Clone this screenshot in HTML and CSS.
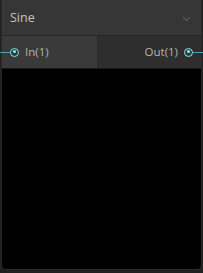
FILE: index.html
```html
<!DOCTYPE html>
<html lang="en">
<head>
  <meta charset="UTF-8">
  <title>Sine Node</title>
  <link rel="stylesheet" href="styles.css">
</head>
<body>
  <div class="node">
    <div class="node-header">
      <span class="node-title">Sine</span>
      <svg class="chevron" width="9" height="6" viewBox="0 0 9 6">
        <path d="M1 1 L4.5 4.5 L8 1" fill="none" stroke="#5a5a5a" stroke-width="1.2"/>
      </svg>
    </div>
    <div class="node-ports">
      <div class="port port-in">
        <span class="wire wire-in"></span>
        <span class="port-dot"></span>
        <span class="port-label">In(1)</span>
      </div>
      <div class="port port-out">
        <span class="port-label">Out(1)</span>
        <span class="port-dot"></span>
        <span class="wire wire-out"></span>
      </div>
    </div>
    <div class="node-preview"></div>
  </div>
</body>
</html>
```

FILE: styles.css
```css
/* General Styles */
* {
  box-sizing: border-box;
}

body {
  margin: 0;
  padding: 0;
  background-color: #202020;
  font-family: "Open Sans", "Liberation Sans", sans-serif;
  width: 203px;
  height: 273px;
  overflow: hidden;
}

.node {
  margin: 0 1px;
  height: 270px;
  display: flex;
  flex-direction: column;
  border: 1px solid #2a2a2a;
  border-top: none;
  border-radius: 0 0 5px 5px;
}

.node-header {
  height: 36px;
  background-color: #363636;
  border-bottom: 1px solid #262626;
  display: flex;
  align-items: center;
  justify-content: space-between;
  padding: 0 10px 0 8px;
}

.node-title {
  color: #c4c4c4;
  font-size: 12.5px;
}

.chevron {
  margin-top: 2px;
}

.node-ports {
  height: 33px;
  display: flex;
  border-bottom: 1px solid #1a1a1a;
}

.port {
  position: relative;
  display: flex;
  align-items: center;
  font-size: 11.5px;
  color: #b4b4b4;
}

.port-in {
  width: 96px;
  background-color: #3a3a3a;
  border-right: 1px solid #2a2a2a;
  padding-left: 8px;
  gap: 6px;
}

.port-out {
  flex: 1;
  background-color: #2e2e2e;
  justify-content: flex-end;
  padding-right: 8px;
  gap: 6px;
}

.port-dot {
  width: 9px;
  height: 9px;
  border-radius: 50%;
  border: 1.5px solid #7ee8ec;
  background-color: #263c3d;
  position: relative;
  z-index: 1;
}

.port-dot::after {
  content: "";
  position: absolute;
  left: 1.5px;
  top: 1.5px;
  width: 3px;
  height: 3px;
  border-radius: 50%;
  background-color: #8ef0f3;
}

.wire {
  position: absolute;
  top: 16px;
  height: 1px;
  background-color: #4e9fa3;
}

.wire-in {
  left: -2px;
  width: 11px;
}

.wire-out {
  right: -3px;
  width: 12px;
}

.port-label {
  line-height: 1;
}

.node-preview {
  flex: 1;
  background-color: #000;
  border-radius: 0 0 4px 4px;
}
```
